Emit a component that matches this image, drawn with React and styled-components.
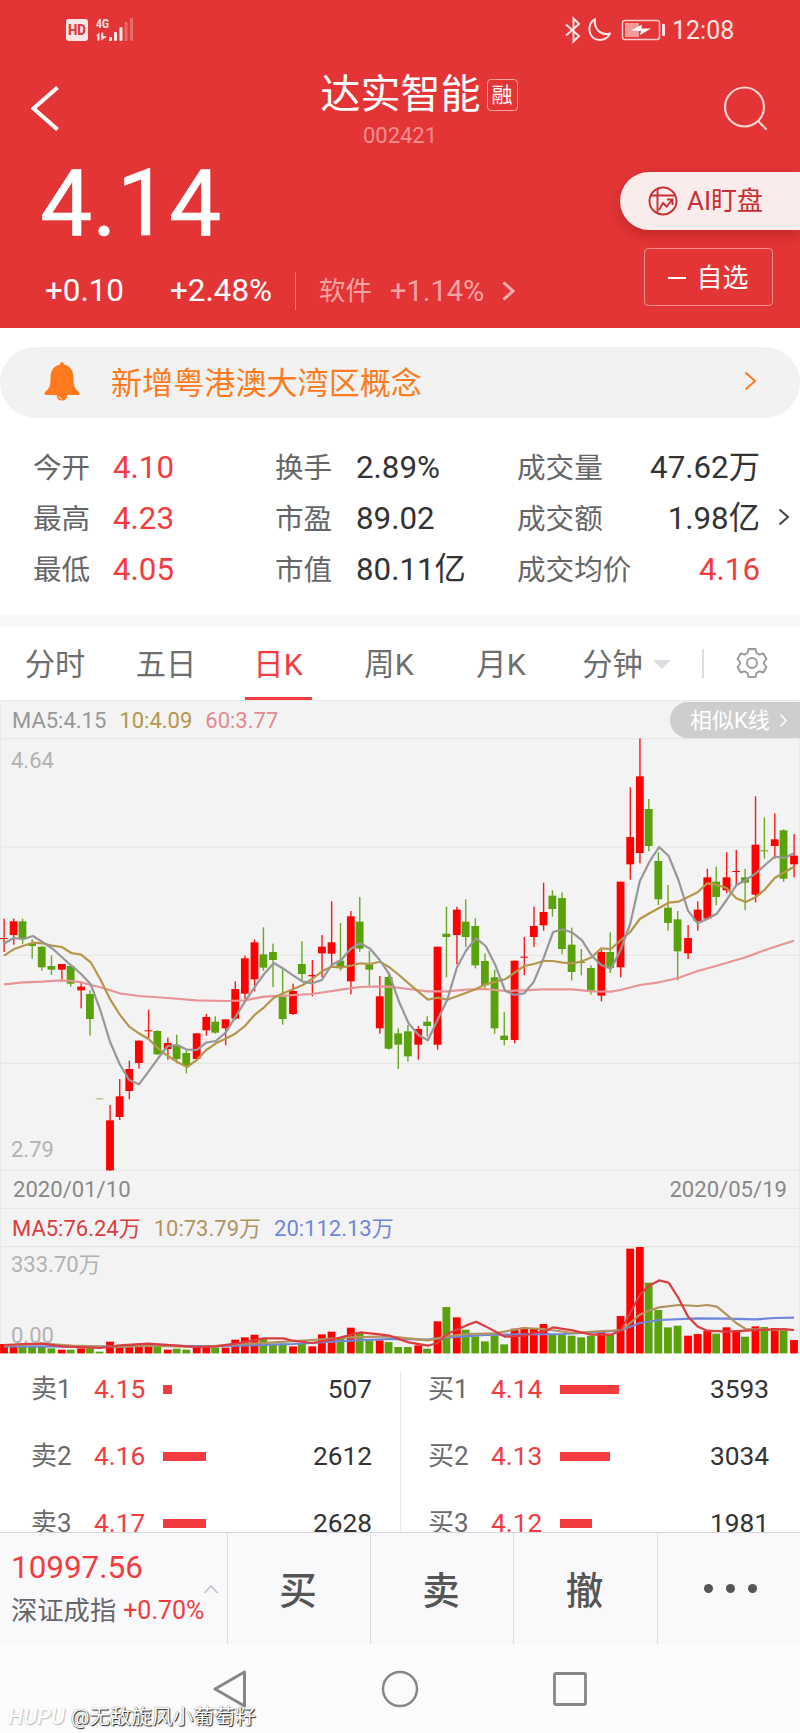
import React from 'react'
import styled, { createGlobalStyle } from 'styled-components'

const RED = '#f43b40'

const GlobalStyle = createGlobalStyle`
	* {
		box-sizing: border-box;
	}

	body {
		margin: 0;
		background: #ffffff;
		font-family: Roboto, 'Noto Sans CJK SC', sans-serif;
		line-height: 1;
	}
`

const Container = styled.div`
	position: relative;
	width: 800px;
	height: 1733px;
	overflow: hidden;
	display: flex;
	flex-direction: column;
	white-space: nowrap;
`

/* header */

const Header = styled.header`
	height: 328px;
	flex: none;
	background: #e33536;
	color: #ffffff;
`

const StatusBar = styled.div`
	display: flex;
	align-items: center;
	justify-content: space-between;
	height: 60px;
	padding: 0 66px 0 65px;
`

const StatusGroup = styled.div`
	display: flex;
	align-items: center;
`

const Time = styled.span`
	margin-left: 5px;
	width: 62px;
	font-size: 25px;
	color: #fbe3e3;
`

const TitleBar = styled.div`
	display: grid;
	grid-template-columns: 90px 1fr 90px;
	height: 94px;
`

const IconCell = styled.div`
	display: flex;
	justify-content: ${({ $end }) => ($end ? 'flex-start' : 'center')};
	padding-top: ${({ $top }) => $top}px;
`

const TitleBlock = styled.div`
	display: flex;
	flex-direction: column;
	align-items: center;
	padding-top: 14px;
`

const TitleLine = styled.div`
	display: flex;
	align-items: center;
	gap: 6px;
	height: 42px;
	margin-left: 38px;
	font-size: 40px;
`

const Tag = styled.span`
	display: flex;
	align-items: center;
	justify-content: center;
	width: 31px;
	height: 32px;
	border: 1.5px solid #f3a3a3;
	border-radius: 4px;
	font-size: 21px;
`

const Code = styled.div`
	margin-top: 9px;
	font-size: 22px;
	color: #f08e8e;
`

const QuoteRow = styled.div`
	display: flex;
	justify-content: space-between;
`

const QuoteMain = styled.div`
	padding-left: 40px;
`

const Price = styled.div`
	height: 97px;
	line-height: 99px;
	font-size: 93px;
	-webkit-text-stroke: 0.6px #ffffff;
`

const ChangeRow = styled.div`
	display: flex;
	align-items: center;
	height: 38px;
	margin: 21px 0 0 5px;
	font-size: 31.4px;
`

const Percent = styled.span`
	margin-left: 46px;
`

const Sector = styled.span`
	display: flex;
	align-items: center;
	height: 38px;
	margin-left: 23px;
	padding-left: 23px;
	border-left: 1.5px solid #ef7f80;
	color: #f4a3a3;
	font-size: 26.5px;
`

const SectorChange = styled.span`
	margin: 0 18px 0 18px;
	font-size: 29px;
`

const QuoteActions = styled.div`
	display: flex;
	flex-direction: column;
	align-items: flex-end;
	padding-top: 18px;
`

const AiButton = styled.div`
	display: flex;
	align-items: center;
	width: 180px;
	height: 58px;
	padding-left: 28px;
	border-radius: 29px 0 0 29px;
	background: #fbecec;
	box-shadow: 0 5px 14px rgba(110, 10, 10, 0.3);
	color: #c73032;
	font-size: 26px;
	gap: 9px;
`

const WatchButton = styled.div`
	display: flex;
	align-items: center;
	justify-content: center;
	gap: 10px;
	width: 129px;
	height: 58px;
	margin: 18px 27px 0 0;
	padding-top: 2px;
	border: 1.5px solid #f18b8c;
	border-radius: 4px;
	font-size: 26px;
`

const Minus = styled.i`
	width: 18px;
	height: 2px;
	background: #ffffff;
`

/* notice */

const Notice = styled.div`
	display: flex;
	align-items: center;
	flex: none;
	height: 71px;
	margin-top: 19px;
	padding: 0 43px 0 43px;
	border-radius: 36px;
	background: #f2f2f2;
	color: #ff7a1c;
	font-size: 31.1px;

	svg {
		margin-bottom: 4px;
	}
`

const NoticeText = styled.span`
	flex: 1;
	margin: 2px 0 0 30px;
`

/* stats */

const Stats = styled.div`
	display: grid;
	grid-template-columns: 79px 163px 80px 162px 120px 122px 1fr;
	grid-template-rows: repeat(3, 51px);
	align-items: center;
	flex: none;
	height: 197px;
	padding: 24px 0 0 34px;
	font-size: 31.3px;
`

const StatLabel = styled.span`
	margin: 2px 0 0 -1px;
	font-size: 28.6px;
	color: #666666;
`

const StatValue = styled.span`
	display: flex;
	justify-content: ${({ $right }) => ($right ? 'flex-end' : 'flex-start')};
	color: ${({ $up }) => ($up ? RED : '#333333')};
`

const StatMore = styled.span`
	display: flex;
	padding: 0 0 3px 18px;
`

const Band = styled.div`
	flex: none;
	height: 12px;
	background: #f7f7f7;
`

/* tabs */

const Tabs = styled.div`
	display: flex;
	flex: none;
	height: 73px;
`

const Tab = styled.div`
	display: flex;
	align-items: center;
	justify-content: center;
	gap: 10px;
	width: ${({ $width }) => $width}px;
	height: 73px;
	padding-top: 4px;
	font-size: 30.3px;
	color: ${({ $active }) => ($active ? RED : '#6e6e6e')};
	background: ${({ $active }) => ($active ? `linear-gradient(${RED}, ${RED}) center bottom / 67px 3px no-repeat` : 'none')};
`

const TabDivider = styled.div`
	width: 1.5px;
	height: 29px;
	margin: 22px 32px 0 7px;
	background: #dddddd;
`

const GearBox = styled.div`
	padding-top: 20px;
`

const Caret = styled.i`
	margin-top: -3px;
	border: 9px solid transparent;
	border-top-color: #dcdde2;
	border-bottom: 0;
`

/* charts */

const ChartSection = styled.section`
	flex: none;
	height: 654px;
	background: #f3f3f3;
	border: 1px solid #e9e9e9;
	border-width: 1px 1px 0 1px;
	font-size: 22px;
`

const Legend = styled.div`
	display: flex;
	align-items: center;
	gap: 13px;
	height: ${({ $height }) => $height}px;
	padding: 3px 0 0 11px;
	border-top: ${({ $line }) => ($line ? '1px solid #e7e7e7' : 'none')};
`

const LegendItem = styled.span`
	color: ${({ $color }) => $color};
`

const SimilarButton = styled.div`
	display: flex;
	align-items: center;
	justify-content: space-between;
	width: 130px;
	height: 36px;
	margin: -3px -1px 0 auto;
	padding: 2px 12px 0 20px;
	border-radius: 18px 0 0 18px;
	background: #cecece;
	color: #ffffff;
`

const Plot = styled.div`
	position: relative;
	height: ${({ $height }) => $height}px;

	svg {
		display: block;
		margin-left: -1px;
	}
`

const AxisLabel = styled.span`
	position: absolute;
	left: 10px;
	top: ${({ $top }) => $top}px;
	color: #b2b2b2;
`

const Dates = styled.div`
	display: flex;
	align-items: center;
	justify-content: space-between;
	height: 37px;
	padding: 0 12px;
	font-size: 22.1px;
	color: #888888;
`

/* order book */

const OrderBook = styled.div`
	display: grid;
	grid-template-columns: 1fr 1fr;
	flex: none;
	height: 178px;
	overflow: hidden;
`

const OrderSide = styled.div`
	height: 240px;
	margin-top: ${({ $divided }) => ($divided ? 17 : 0)}px;
	padding-top: ${({ $divided }) => ($divided ? 0 : 17)}px;
	border-left: ${({ $divided }) => ($divided ? '1.5px solid #e8e8e8' : 'none')};
`

const OrderRow = styled.div`
	display: grid;
	grid-template-columns: 63px 69px 1fr auto;
	align-items: center;
	height: 36px;
	margin-bottom: 31.2px;
	padding: 0 ${({ $right }) => $right}px 0 ${({ $left }) => $left}px;
	font-size: 26.3px;
	color: #333333;
`

const OrderLabel = styled.span`
	font-size: 26px;
	color: #6a6a6a;
`

const OrderPrice = styled.span`
	color: ${RED};
`

const OrderBar = styled.i`
	width: ${({ $width }) => $width}px;
	height: 9px;
	background: ${RED};
`

/* bottom */

const BottomBar = styled.div`
	display: grid;
	grid-template-columns: 227px 143px 143px 144px 1fr;
	flex: none;
	height: 112px;
	border-top: 1.5px solid #d8d8da;
	background: #f9f9fc;
`

const IndexCell = styled.div`
	display: flex;
	align-items: center;
	justify-content: space-between;
	padding: 0 8px 0 11px;
`

const IndexValue = styled.div`
	margin-top: -1px;
	font-size: 31.4px;
	color: ${RED};
`

const IndexName = styled.div`
	display: flex;
	align-items: center;
	width: 190px;
	gap: 7px;
	margin-top: 14px;
	font-size: 26.3px;
	color: #66666a;
`

const IndexChange = styled.span`
	font-size: 25px;
	color: ${RED};
`

const IndexArrow = styled.div`
	margin-left: -8px;
`

const Action = styled.div`
	display: flex;
	align-items: center;
	justify-content: center;
	gap: 13px;
	padding: 6px 2px 0 0;
	border-left: 1.5px solid #dcdcde;
	font-size: 37.5px;
	font-weight: 500;
	color: #555555;
`

const Dot = styled.i`
	position: relative;
	left: 2px;
	width: 9px;
	height: 9px;
	margin-top: -7px;
	border-radius: 50%;
	background: #555555;
`

const NavBar = styled.div`
	display: grid;
	grid-template-columns: repeat(3, 170px);
	justify-content: center;
	justify-items: center;
	align-items: center;
	flex: 1;
	background: #fcfcfc;
`

const Watermark = styled.div`
	position: absolute;
	left: 8px;
	bottom: 5px;
	display: flex;
	align-items: center;
	gap: 6px;
	font-size: 20.8px;
	color: #ffffff;
	text-shadow: 1px 1px 1px #222222, 0 0 1px #555555;
`

const WatermarkLogo = styled.span`
	font-size: 22px;
	font-style: italic;
	font-weight: 500;
	text-shadow: 1px 1px 1px #bbbbbb, 0 0 1px #cccccc;
`

const STATS = [
	['今开', '4.10', true, '换手', '2.89%', '成交量', '47.62万', false],
	['最高', '4.23', true, '市盈', '89.02', '成交额', '1.98亿', false],
	['最低', '4.05', true, '市值', '80.11亿', '成交均价', '4.16', true]
]

const TABS = [
	{ label: '分时', width: 110 },
	{ label: '五日', width: 112 },
	{ label: '日K', width: 112, active: true },
	{ label: '周K', width: 110 },
	{ label: '月K', width: 114 },
	{ label: '分钟', width: 137, caret: true }
]

const SELL = [['卖1', '4.15', 9, '507'], ['卖2', '4.16', 43, '2612'], ['卖3', '4.17', 43, '2628']]
const BUY = [['买1', '4.14', 59, '3593'], ['买2', '4.13', 50, '3034'], ['买3', '4.12', 32, '1981']]

// r = up day, g = down day; high, body top, body bottom, low in thirds of a pixel
const CANDLES = `r656,714,717,756 r656,664,705,734 g656,664,718,732 g718,732,738,776 g738,740,802,812 g766,798,809,825
r792,792,809,839 g798,798,851,860 r845,860,871,925 g871,882,957,1007 g1194,1195,1198,1198 r1215,1261,1411,1414
r1137,1189,1251,1260 r1082,1107,1173,1198 r1022,1022,1089,1106 r929,991,994,1015 g991,993,1063,1065 r1013,1029,1047,1079
g1004,1036,1077,1090 g1052,1059,1096,1120 r1000,1000,1077,1080 r942,951,991,1007 g949,965,998,1001 r958,958,985,1036
r844,867,956,960 r767,775,881,897 r718,727,838,874 g682,763,803,812 g731,756,780,861 g807,890,957,974
r851,873,942,945 g724,792,822,845 r780,825,829,889 r705,740,760,832 r604,727,761,795 g669,782,804,812
r633,649,844,883 g591,665,746,755 g752,793,809,857 r828,889,985,1001 g816,831,1046,1049 g985,1000,1034,1107
g975,994,1069,1085 r978,987,1034,1079 g949,965,978,1010 r740,740,1034,1049 g620,701,711,832 r620,629,705,793
g598,665,711,741 g655,678,796,805 g760,783,856,866 g809,832,985,1001 g936,1007,1020,1036 r782,782,1020,1030
r711,770,773,825 r620,678,711,741 r548,636,676,692 g571,587,627,650 g577,594,747,763 g683,734,816,841
g747,786,789,826 g796,804,872,884 r749,756,887,904 g697,756,804,819 r545,545,802,832 r262,411,493,539
r115,229,459,490 g297,327,438,454 g457,483,598,615 g555,623,669,692 g633,658,754,841 r675,714,760,777
r604,629,663,692 r506,532,656,658 g500,545,591,616 r457,532,571,580 r450,513,516,555 g506,532,548,630
r289,434,584,607 g352,451,454,476 r340,418,438,476 g388,391,536,545 r402,467,493,532`
	.split(/\s+/)
	.map(item => ({ up: item[0] === 'r', values: item.slice(1).split(',').map(Number) }))

const VOLUMES = [
	433, 441, 441, 441, 441, 446, 450, 450, 446, 446, 456, 426, 440, 440, 432, 432, 442, 450, 447, 450, 442, 442, 444, 444,
	420, 413, 405, 418, 432, 432, 440, 432, 440, 404, 396, 415, 384, 398, 423, 422, 427, 442, 442, 437, 447, 365, 322, 353,
	390, 410, 425, 408, 434, 387, 384, 387, 373, 405, 406, 408, 413, 408, 397, 404, 349, 147, 142, 249, 331, 383, 378, 408,
	403, 393, 402, 383, 393, 411, 380, 382, 385, 392, 421
]

const MA5 = [
	731, 714, 717, 708, 726, 745, 771, 797, 822, 853, 930, 1025, 1092, 1140, 1153, 1115, 1075, 1038, 1035, 1049, 1050, 1028,
	1023, 998, 952, 905, 862, 822, 789, 806, 826, 845, 850, 840, 795, 780, 746, 730, 746, 780, 823, 905, 970, 1004, 1021, 960,
	900, 803, 750, 715, 738, 795, 872, 885, 880, 845, 775, 696, 688, 698, 721, 767, 795, 806, 750, 672, 544, 485, 441, 468,
	540, 632, 670, 657, 641, 600, 556, 540, 521, 495, 470, 474, 460
].map((y, i) => [i, y])

const MA10 = [
	767, 748, 737, 728, 730, 737, 741, 759, 764, 787, 838, 897, 943, 980, 1000, 1017, 1045, 1068, 1086, 1101, 1080, 1050,
	1030, 1016, 1001, 978, 945, 922, 893, 880, 868, 855, 837, 814, 800, 803, 797, 790, 792, 785, 802, 825, 850, 875, 899, 893,
	899, 889, 878, 867, 853, 845, 838, 818, 798, 792, 783, 783, 788, 790, 784, 772, 745, 747, 721, 696, 657, 640, 624, 608,
	605, 591, 577, 550, 555, 564, 595, 606, 592, 568, 534, 517, 500
].map((y, i) => [i, y])

const MA60 = [
	[0, 853], [2, 847], [4, 845], [6, 841], [7, 843], [8, 847], [9, 855], [10, 862], [11, 871], [12, 880], [14, 888],
	[17, 894], [20, 901], [23, 903], [25, 901], [27, 890], [29, 887], [32, 882], [35, 869], [37, 861], [39, 859], [40, 860],
	[42, 867], [44, 874], [46, 874], [48, 869], [50, 867], [52, 873], [54, 871], [56, 868], [59, 868], [61, 874], [63, 875],
	[64, 870], [66, 855], [68, 847], [70, 834], [72, 813], [74, 797], [76, 780], [77, 772], [79, 750], [81, 731], [82, 722]
]

const VOL_MA5 = [
	[0, 436], [2, 433], [4, 432], [6, 440], [10, 445], [12, 437], [15, 432], [18, 438], [20, 442], [22, 440], [24, 432],
	[26, 422], [27, 416], [29, 416], [30, 423], [32, 430], [34, 420], [36, 405], [37, 398], [39, 404], [40, 408], [42, 428],
	[44, 438], [45, 430], [46, 403], [48, 377], [49, 366], [50, 380], [52, 411], [54, 408], [55, 400], [56, 395], [57, 383],
	[59, 392], [61, 405], [63, 405], [64, 393], [65, 340], [66, 285], [67, 257], [68, 242], [69, 249], [70, 295], [71, 350],
	[72, 380], [73, 393], [75, 396], [77, 393], [79, 390], [81, 388], [82, 391]
]

const VOL_MA10 = [
	[0, 438], [4, 432], [7, 438], [12, 442], [15, 438], [20, 442], [25, 433], [28, 428], [32, 421], [36, 413], [40, 410],
	[44, 422], [46, 410], [48, 403], [51, 401], [53, 390], [54, 385], [56, 388], [59, 400], [62, 394], [64, 392], [65, 370],
	[66, 345], [67, 332], [68, 323], [70, 316], [72, 319], [73, 316], [74, 321], [75, 345], [76, 370], [77, 388], [79, 390],
	[82, 391]
]

const VOL_MA20 = [
	[0, 440], [10, 441], [16, 438], [22, 440], [30, 433], [36, 423], [40, 418], [44, 420], [46, 413], [50, 406], [54, 404],
	[58, 403], [62, 397], [64, 392], [66, 370], [68, 361], [72, 356], [75, 357], [78, 359], [80, 355], [82, 354]
]

const getX = i => 4 + i * 9.634
const getColor = up => (up ? '#ff0000' : '#5aa20b')

const Line = ({ points, top, color }) => (
	<polyline
		points={points.map(([i, y]) => `${getX(i).toFixed(1)},${(y / 3 - top).toFixed(1)}`).join(' ')}
		fill="none"
		stroke={color}
		strokeWidth="2.2"
		strokeLinejoin="round"
	/>
)

const GridLines = ({ rows }) => rows.map(y => <rect key={y} x="0" y={y} width="800" height="1.2" fill="#e7e7e7" />)

const Chevron = ({ width, height, color, stroke = 2, left }) => (
	<svg width={width} height={height} viewBox={`0 0 ${width} ${height}`} fill="none" stroke={color} strokeWidth={stroke}>
		<path d={left
			? `M${width - 1.5} 1.5L2.5 ${height / 2}L${width - 1.5} ${height - 1.5}`
			: `M1.5 1.5L${width - 2} ${height / 2}L1.5 ${height - 1.5}`}
		/>
	</svg>
)

const PriceChart = () => (
	<svg width="800" height="433" viewBox="0 0 800 433">
		<GridLines rows={[0, 108.5, 216.7, 324.8, 432]} />
		{CANDLES.map(({ up, values }, i) => {
			const [high, open, close, low] = values.map(v => v / 3 - 38)
			const x = getX(i) + (up ? 0 : -0.8)

			return (
				<g key={i} fill={getColor(up)} opacity={i === 10 ? 0.55 : 1}>
					<rect x={x - 0.6} y={high} width="1.4" height={low - high} opacity="0.9" />
					<rect x={x - 3.9} y={open} width="7.8" height={Math.max(close - open, 1)} />
				</g>
			)
		})}
		<Line points={MA60} top={38} color="#e89496" />
		<Line points={MA10} top={38} color="#b6964a" />
		<Line points={MA5} top={38} color="#979797" />
	</svg>
)

const VolumeChart = () => (
	<svg width="800" height="108" viewBox="0 0 800 108">
		<GridLines rows={[0]} />
		{VOLUMES.map((v, i) => {
			const { up } = CANDLES[i]

			return (
				<rect
					key={i}
					x={getX(i) - (up ? 3.9 : 4.7)}
					y={v / 3 - 46.3}
					width="7.8"
					height={(461 - v) / 3}
					fill={getColor(up)}
				/>
			)
		})}
		<Line points={VOL_MA20} top={46.3} color="#6f86dc" />
		<Line points={VOL_MA10} top={46.3} color="#b1935f" />
		<Line points={VOL_MA5} top={46.3} color="#db3c3f" />
	</svg>
)

const NetworkIcons = () => (
	<svg width="70" height="32" viewBox="0 -3 70 32" fill="#fbe6e6">
		<rect x="1" y="2" width="22" height="22" rx="3" />
		<text x="12" y="18" textAnchor="middle" fontSize="14" fontWeight="800" fill="#e33536" textLength="18" lengthAdjust="spacingAndGlyphs">HD</text>
		<text x="31" y="11" fontSize="13.5" fontWeight="700" textLength="13" lengthAdjust="spacingAndGlyphs">4G</text>
		<path d="M31 18.500L34.500 15.500V23.500H32.300V18.500ZM36.200 15.500H38.200V19L42 19.500L36.200 23.500Z" />
		<rect x="44" y="20" width="3" height="4" />
		<rect x="49" y="15" width="3" height="9" rx="1" />
		<rect x="54.500" y="10" width="3" height="14" rx="1" />
		<rect x="59.500" y="5" width="3" height="19" rx="1" opacity="0.3" />
		<rect x="65" y="1" width="3" height="23" rx="1" opacity="0.3" />
	</svg>
)

const SystemIcons = () => (
	<svg width="103" height="28" viewBox="0 0 103 28" fill="none" stroke="#fbe3e3">
		<path d="M2 8.500L15 20L9.500 25.500V2.500L15 8L2 19.500" strokeWidth="2" />
		<path d="M31 3.200C22 8 24 24 36 24C40 24 44 21.500 46 17.500C37 20 29.500 13 31 3.200Z" strokeWidth="2" strokeLinejoin="round" />
		<rect x="58.500" y="4.500" width="37" height="19" rx="2.500" strokeWidth="1.500" opacity="0.85" />
		<rect x="61" y="7" width="14" height="14" fill="#f39a9a" stroke="none" />
		<path d="M67 14.500L78 8.500L77.500 12.500H87L76 19L77 15Z" fill="#ffffff" stroke="none" />
		<rect x="98" y="8" width="3" height="12" rx="1" fill="#fbe3e3" stroke="none" />
	</svg>
)

const SearchIcon = () => (
	<svg width="46" height="46" viewBox="0 0 46 46" fill="none" stroke="#f9d2d2" strokeWidth="2.2" strokeLinecap="round">
		<circle cx="21.500" cy="21" r="19.500" />
		<path d="M36 36L43 43" />
	</svg>
)

const AiIcon = () => (
	<svg width="30" height="30" viewBox="0 0 30 30" fill="none" stroke="#c73032" strokeWidth="1.900">
		<circle cx="15" cy="15" r="13.500" />
		<path d="M9.500 3V26M2.500 9.500H27.500M11 24L15 17L18.500 20.500L24.500 13.500M19 13.500H24.500V19" />
	</svg>
)

const BellIcon = () => (
	<svg width="38" height="40" viewBox="0 0 38 40" fill="#ff7a1c">
		<path d="M17 3.500Q17 1 19 1Q21 1 21 3.500C27.500 5 30.500 10 30.500 17C30.500 25 32 28 36 31Q37.500 33.500 35 34H3Q0.500 33.500 2 31C6 28 7.500 25 7.500 17C7.500 10 10.500 5 17 3.500Z" />
		<path d="M13.500 34H24.500Q24 39.500 19 39.500Q14 39.500 13.500 34Z" />
		<path d="M16 35.500Q17 38 19 38" fill="none" stroke="#f2f2f2" />
	</svg>
)

const GearIcon = () => (
	<svg width="32" height="32" viewBox="0 0 32 32" fill="none" stroke="#999999" strokeWidth="1.900" strokeLinejoin="round">
		<path d="M12.500 2H19.500L20.500 6L23.500 7.700L27.300 6.500L30.500 12L28 15V17L30.500 20L27.300 25.500L23.500 24.300L20.500 26L19.500 30H12.500L11.500 26L8.500 24.300L4.700 25.500L1.500 20L4 17V15L1.500 12L4.700 6.500L8.500 7.700L11.500 6Z" />
		<circle cx="16" cy="16" r="5" />
	</svg>
)

const OrderList = ({ items, left, right, divided }) => (
	<OrderSide $divided={divided}>
		{items.map(([label, price, width, amount]) => (
			<OrderRow key={label} $left={left} $right={right}>
				<OrderLabel>{label}</OrderLabel>
				<OrderPrice>{price}</OrderPrice>
				<OrderBar $width={width} />
				<span>{amount}</span>
			</OrderRow>
		))}
	</OrderSide>
)

const App = () => {
	const _renderStat = ([open, openValue, up, rate, rateValue, total, totalValue, totalUp], i) => (
		<React.Fragment key={open}>
			<StatLabel>{open}</StatLabel>
			<StatValue $up={up}>{openValue}</StatValue>
			<StatLabel>{rate}</StatLabel>
			<StatValue>{rateValue}</StatValue>
			<StatLabel>{total}</StatLabel>
			<StatValue $up={totalUp} $right>{totalValue}</StatValue>
			<StatMore>{i === 1 && <Chevron width={12} height={18} color="#444444" />}</StatMore>
		</React.Fragment>
	)

	return (
		<Container>
			<GlobalStyle />
			<Header>
				<StatusBar>
					<StatusGroup>
						<NetworkIcons />
					</StatusGroup>
					<StatusGroup>
						<SystemIcons />
						<Time>12:08</Time>
					</StatusGroup>
				</StatusBar>
				<TitleBar>
					<IconCell $top={26}>
						<Chevron width={28} height={45} color="#ffffff" stroke={4} left />
					</IconCell>
					<TitleBlock>
						<TitleLine>
							达实智能
							<Tag>融</Tag>
						</TitleLine>
						<Code>002421</Code>
					</TitleBlock>
					<IconCell $top={26} $end>
						<Spacer />
						<SearchIcon />
					</IconCell>
				</TitleBar>
				<QuoteRow>
					<QuoteMain>
						<Price>4.14</Price>
						<ChangeRow>
							<span>+0.10</span>
							<Percent>+2.48%</Percent>
							<Sector>
								软件
								<SectorChange>+1.14%</SectorChange>
								<Chevron width={13} height={20} color="#f6b0b0" stroke={3} />
							</Sector>
						</ChangeRow>
					</QuoteMain>
					<QuoteActions>
						<AiButton>
							<AiIcon />
							AI盯盘
						</AiButton>
						<WatchButton>
							<Minus />
							自选
						</WatchButton>
					</QuoteActions>
				</QuoteRow>
			</Header>

			<Notice>
				<BellIcon />
				<NoticeText>新增粤港澳大湾区概念</NoticeText>
				<Chevron width={13} height={20} color="#ff7a1c" />
			</Notice>

			<Stats>{STATS.map(_renderStat)}</Stats>
			<Band />

			<Tabs>
				{TABS.map(({ label, width, active, caret }) => (
					<Tab key={label} $width={width} $active={active}>
						{label}
						{caret && <Caret />}
					</Tab>
				))}
				<TabDivider />
				<GearBox>
					<GearIcon />
				</GearBox>
			</Tabs>

			<ChartSection>
				<Legend $height={37}>
					<LegendItem $color="#979797">MA5:4.15</LegendItem>
					<LegendItem $color="#b6964a">10:4.09</LegendItem>
					<LegendItem $color="#e48b8d">60:3.77</LegendItem>
					<SimilarButton>
						相似K线
						<Chevron width={9} height={15} color="#ffffff" stroke={1.5} />
					</SimilarButton>
				</Legend>
				<Plot $height={433}>
					<PriceChart />
					<AxisLabel $top={12}>4.64</AxisLabel>
					<AxisLabel $top={401}>2.79</AxisLabel>
				</Plot>
				<Dates>
					<span>2020/01/10</span>
					<span>2020/05/19</span>
				</Dates>
				<Legend $height={38} $line>
					<LegendItem $color="#db3c3f">MA5:76.24万</LegendItem>
					<LegendItem $color="#b1935f">10:73.79万</LegendItem>
					<LegendItem $color="#6f86dc">20:112.13万</LegendItem>
				</Legend>
				<Plot $height={108}>
					<AxisLabel $top={8}>333.70万</AxisLabel>
					<AxisLabel $top={79}>0.00</AxisLabel>
					<VolumeChart />
				</Plot>
			</ChartSection>

			<OrderBook>
				<OrderList items={SELL} left={31} right={28} />
				<OrderList items={BUY} left={27} right={31} divided />
			</OrderBook>

			<BottomBar>
				<IndexCell>
					<div>
						<IndexValue>10997.56</IndexValue>
						<IndexName>
							深证成指
							<IndexChange>+0.70%</IndexChange>
						</IndexName>
					</div>
					<IndexArrow>
						<svg width="16" height="10" viewBox="0 0 16 10" fill="none" stroke="#c4c4c8" strokeWidth="1.800">
							<path d="M1.500 9L8 2L14.500 9" />
						</svg>
					</IndexArrow>
				</IndexCell>
				<Action>买</Action>
				<Action>卖</Action>
				<Action>撤</Action>
				<Action>
					<Dot />
					<Dot />
					<Dot />
				</Action>
			</BottomBar>

			<NavBar>
				<svg width="36" height="40" viewBox="0 0 36 40" fill="none" stroke="#878787" strokeWidth="3" strokeLinejoin="round">
					<path d="M32.500 3V37L3 20Z" />
				</svg>
				<svg width="40" height="40" viewBox="0 0 40 40" fill="none" stroke="#878787" strokeWidth="2.500">
					<circle cx="20" cy="20" r="17" />
				</svg>
				<svg width="36" height="36" viewBox="0 0 36 36" fill="none" stroke="#878787" strokeWidth="2.800">
					<rect x="2.500" y="2.500" width="31" height="31" rx="1.500" />
				</svg>
			</NavBar>

			<Watermark>
				<WatermarkLogo>HUPU</WatermarkLogo>
				@无敌旋风小葡萄籽
			</Watermark>
		</Container>
	)
}

const Spacer = styled.i`
	width: 13px;
`

export default App
